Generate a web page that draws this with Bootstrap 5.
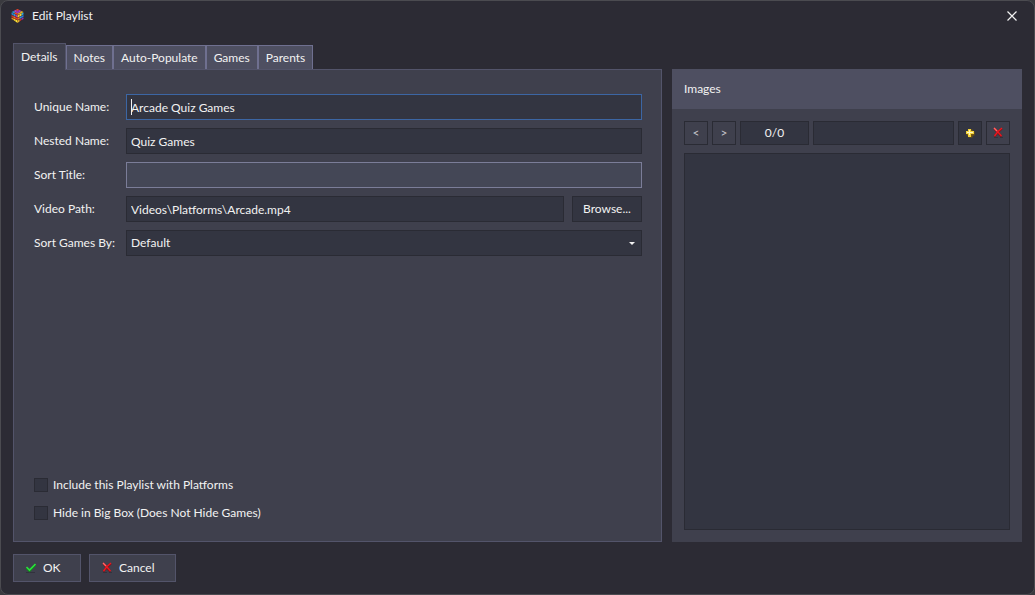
<!DOCTYPE html>
<html lang="en">
<head>
<meta charset="utf-8">
<meta name="viewport" content="width=device-width, initial-scale=1">
<title>Edit Playlist</title>
<link href="https://cdn.jsdelivr.net/npm/bootstrap@5.3.0/dist/css/bootstrap.min.css" rel="stylesheet">
<style>
  :root { --win: #2c2b34; --panel: #3f404d; --field: #333541; --edge: #2a2b34; --head: #4e4f61; --line: #53546a; }
  body { background: #3a3a3f; color: #f2f2f2; font-family: Lato, "Open Sans", sans-serif; font-size: 12px; line-height: 16px; }
  .dialog-window { background: var(--win); border: 1px solid #4b4b50; border-radius: 8px; min-height: 100vh; padding: 0 12px 12px; }
  .title-bar { height: 30px; margin: 0 -2px; }
  .close-btn { width: 24px; height: 24px; background: none; border: 0; }
  .tab-strip { height: 26px; margin-top: 12px; position: relative; z-index: 1; }
  .tab-strip .nav-link { height: 24px; padding: 0 7px; border: 1px solid #6f7090; border-bottom: 0; border-radius: 0; background: var(--head); color: #f2f2f2; font-size: 12px; line-height: 16px; margin: 0; }
  .tab-strip .nav-link.active { height: 27px; padding-bottom: 1px; border-color: var(--line); background: var(--panel); color: #f2f2f2; margin-bottom: -1px; }
  .tab-page { min-width: 0; background: var(--panel); border: 1px solid var(--line); padding: 24px 19px 18px 20px; }
  .content-row { gap: 10px; margin-bottom: 12px; }
  .field-label { width: 92px; flex: none; }
  .field { height: 26px; padding: 0 4px; border: 1px solid var(--edge); border-radius: 0; background-color: var(--field); color: #f2f2f2; font-size: 12px; line-height: 16px; min-height: 0; }
  .field:focus { background-color: var(--field); color: #f2f2f2; box-shadow: none; border-color: #3c66a4; }
  .field-active { border-color: #3c66a4; }
  .field-hover { background-color: #444756; border-color: #7b7d98; }
  select.field { appearance: none; background-image: url("data:image/svg+xml,%3Csvg xmlns='http://www.w3.org/2000/svg' viewBox='0 0 6 3'%3E%3Cpath d='M0 0h6L3 3z' fill='%23f2f2f2'/%3E%3C/svg%3E"); background-size: 6px 3px; background-position: right 6px center; background-repeat: no-repeat; }
  .text-caret { position: absolute; left: 5px; top: 5px; width: 1px; height: 16px; background: #f2f2f2; }
  .dark-btn { border: 1px solid var(--edge); border-radius: 0; background: var(--field); color: #f2f2f2; padding: 0; font-size: 12px; line-height: 16px; }
  .browse-btn { width: 70px; height: 26px; flex: none; }
  .check-row { height: 20px; gap: 5px; }
  .tick { width: 14px; height: 14px; margin: 0; border: 1px solid var(--edge); border-radius: 0; background: var(--field); flex: none; appearance: none; }
  .images-pane { width: 350px; flex: none; background: var(--panel); }
  .images-head { height: 40px; background: var(--head); padding: 0 12px; font-size: 12px; line-height: 16px; }
  .image-body { padding: 12px; }
  .image-name { height: 24px; width: auto; min-width: 0; flex: 1; }
  .tool-btn { width: 24px; height: 24px; flex: none; }
  .tool-flat { background: var(--panel); color: #c4c4ca; }
  .counter { width: 69px; height: 24px; flex: none; border: 1px solid var(--edge); background: var(--field); }
  .image-area { border: 1px solid var(--edge); background: var(--field); }
  .action-btn { height: 28px; border: 1px solid var(--line); border-radius: 0; background: var(--panel); color: #f2f2f2; padding: 0 0 0 11px; gap: 5px; font-size: 12px; line-height: 16px; }
  .ok-btn { width: 68px; }
  .cancel-btn { width: 87px; }
</style>
<script src="https://cdn.jsdelivr.net/npm/bootstrap@5.3.0/dist/js/bootstrap.bundle.min.js"></script>
</head>
<body>
<svg width="0" height="0" class="position-absolute" aria-hidden="true">
  <defs>
    <g id="cross">
      <path d="M2 10.500h4M8 10.500h3" stroke="#2b2a33" stroke-width="1" opacity=".6"/>
      <path d="M2.500 2L5.500 5L9.500 9.500M10 1.500L6 5L2.500 9.500" fill="none" stroke="#8b0e14" stroke-width="2"/>
      <path d="M2 1L5.500 4.500L9.500 9M10 1L6 4.500L2.500 9" fill="none" stroke="#e81a22" stroke-width="1.300"/>
      <path d="M2 1L5 4" stroke="#ff6a6a" stroke-width="1.200"/>
    </g>
  </defs>
</svg>
<div class="dialog-window d-flex flex-column">
  <header class="title-bar d-flex align-items-center">
    <svg width="13" height="14" viewBox="0 0 12 14" aria-hidden="true">
      <path d="M6 0L12 3V10L6 14L0 10V3z" fill="#3a1c2a"/>
      <path d="M6 0L8 1L6 2L4 1z" fill="#e8452c"/><path d="M4 1L6 2L4 3.500L2 2z" fill="#b83cc0"/><path d="M8 1L10 2L8 3.500L6 2z" fill="#a338c8"/>
      <path d="M2 2L4 3.500L2.500 4.500L0 3z" fill="#2996c8"/><path d="M10 2L12 3L10 4.500L8 3.500z" fill="#d8b22a"/><path d="M6 2L8 3.500L6 4.500L4 3.500z" fill="#9a3ac0"/><path d="M6 4.500L8 3.500L10 4.500L6 6z" fill="#d7952a"/><path d="M6 4.500L4 3.500L2.500 4.500L6 6z" fill="#f04b23"/>
      <path d="M0 3.500L2 4.500V6.500L0 5.500z" fill="#2587d0"/><path d="M2 4.500L4 5.500V7.500L2 6.500z" fill="#2aa0e0"/><path d="M4 5.500L6 6.500V8.500L4 7.500z" fill="#a03ac0"/>
      <path d="M0 6L2 7V9L0 8z" fill="#c0392f"/><path d="M2 7L4 8V10L2 9z" fill="#ff6a1a"/><path d="M4 8L6 9V11L4 10z" fill="#f03a1c"/>
      <path d="M0 8.500L2 9.500V11L0 10z" fill="#e09020"/><path d="M2 9.500L4 10.500V12.500L2 11z" fill="#ffdf2e"/><path d="M4 10.500L6 11.500V14L4 12.500z" fill="#ffee33"/>
      <path d="M12 3.500L10 4.500V6.500L12 5.500z" fill="#2bb0e0"/><path d="M10 4.500L8 5.500V7.500L10 6.500z" fill="#ffe23a"/><path d="M8 5.500L6 6.500V8.500L8 7.500z" fill="#ffd02a"/>
      <path d="M12 6L10 7V9L12 8z" fill="#2a82e0"/><path d="M10 7L8 8V10L10 9z" fill="#2a9af0"/><path d="M8 8L6 9V11L8 10z" fill="#ff6a1a"/>
      <path d="M12 8.500L10 9.500V11L12 10z" fill="#8f35c8"/><path d="M10 9.500L8 10.500V12.500L10 11z" fill="#c8342a"/><path d="M8 10.500L6 11.500V14L8 12.500z" fill="#e0b02c"/>
    </svg>
    <span class="flex-grow-1 ps-1 ms-1 ms-0">Edit Playlist</span>
    <button type="button" class="close-btn p-0 d-flex align-items-center justify-content-center" aria-label="Close">
      <svg width="10" height="10" viewBox="0 0 10 10"><path d="M0.500 0.500L9.500 9.500M9.500 0.500L0.500 9.500" stroke="#f2f2f2" stroke-width="1.200"/></svg>
    </button>
  </header>

  <ul class="tab-strip nav border-0 align-items-end" role="tablist">
    <li class="nav-item"><button type="button" class="nav-link active" role="tab" aria-selected="true">Details</button></li>
    <li class="nav-item"><button type="button" class="nav-link" role="tab">Notes</button></li>
    <li class="nav-item"><button type="button" class="nav-link" role="tab">Auto-Populate</button></li>
    <li class="nav-item"><button type="button" class="nav-link" role="tab">Games</button></li>
    <li class="nav-item"><button type="button" class="nav-link" role="tab">Parents</button></li>
  </ul>

  <main class="content-row d-flex flex-grow-1">
    <form class="tab-page flex-grow-1 d-flex flex-column gap-2">
      <div class="d-flex align-items-center">
        <label class="field-label" for="unique">Unique Name:</label>
        <div class="position-relative flex-grow-1"><input id="unique" type="text" class="form-control field field-active" value="Arcade Quiz Games"><span class="text-caret"></span></div>
      </div>
      <div class="d-flex align-items-center">
        <label class="field-label" for="nested">Nested Name:</label>
        <input id="nested" type="text" class="form-control field" value="Quiz Games">
      </div>
      <div class="d-flex align-items-center">
        <label class="field-label" for="sorttitle">Sort Title:</label>
        <input id="sorttitle" type="text" class="form-control field field-hover">
      </div>
      <div class="d-flex align-items-center">
        <label class="field-label" for="video">Video Path:</label>
        <input id="video" type="text" class="form-control field me-2" value="Videos\Platforms\Arcade.mp4">
        <button type="button" class="btn dark-btn browse-btn">Browse...</button>
      </div>
      <div class="d-flex align-items-center">
        <label class="field-label" for="sortby">Sort Games By:</label>
        <select id="sortby" class="form-select field"><option>Default</option></select>
      </div>
      <div class="mt-auto d-flex flex-column gap-2">
        <div class="check-row d-flex align-items-center"><input class="tick" type="checkbox" id="include"><label for="include">Include this Playlist with Platforms</label></div>
        <div class="check-row d-flex align-items-center"><input class="tick" type="checkbox" id="hide"><label for="hide">Hide in Big Box (Does Not Hide Games)</label></div>
      </div>
    </form>

    <section class="images-pane d-flex flex-column">
      <h2 class="images-head d-flex align-items-center m-0 fw-normal">Images</h2>
      <div class="image-body flex-grow-1 d-flex flex-column gap-2">
        <div class="d-flex gap-1">
          <button type="button" class="btn dark-btn tool-btn tool-flat">&lt;</button>
          <button type="button" class="btn dark-btn tool-btn tool-flat">&gt;</button>
          <div class="counter d-flex align-items-center justify-content-center">0/0</div>
          <input type="text" class="form-control field image-name" aria-label="Image type">
          <button type="button" class="btn dark-btn tool-btn d-flex align-items-center justify-content-center" aria-label="Add image">
            <svg width="10" height="10" viewBox="0 0 10 10"><path d="M3.500 1.500h4v2h2v4h-2v2h-4v-2h-2v-4h2z" fill="#77580c"/><path d="M3 1h3v2h3v3H6v3H3V6H1V3h2z" fill="#f3d33c"/><path d="M4 2h1v2h3v1H5v2H4V5H2V4h2z" fill="#fff8c4"/></svg>
          </button>
          <button type="button" class="btn dark-btn tool-btn tool-flat d-flex align-items-center justify-content-center" aria-label="Remove image">
            <svg width="13" height="13" viewBox="0 0 13 13"><use href="#cross"/></svg>
          </button>
        </div>
        <div class="image-area flex-grow-1"></div>
      </div>
    </section>
  </main>

  <footer class="d-flex gap-2">
    <button type="button" class="btn action-btn ok-btn d-flex align-items-center">
      <svg width="13" height="13" viewBox="0 0 13 13"><path d="M1 10.500h9" stroke="#2b2a33" opacity=".6"/><path d="M1.500 6L4.500 9L10.500 3" fill="none" stroke="#11801e" stroke-width="2"/><path d="M1.500 5L4.500 8L10.500 2" fill="none" stroke="#2ce03c" stroke-width="1.600"/></svg>
      <span>OK</span>
    </button>
    <button type="button" class="btn action-btn cancel-btn d-flex align-items-center">
      <svg width="13" height="13" viewBox="0 0 13 13"><use href="#cross"/></svg>
      <span>Cancel</span>
    </button>
  </footer>
</div>
</body>
</html>
